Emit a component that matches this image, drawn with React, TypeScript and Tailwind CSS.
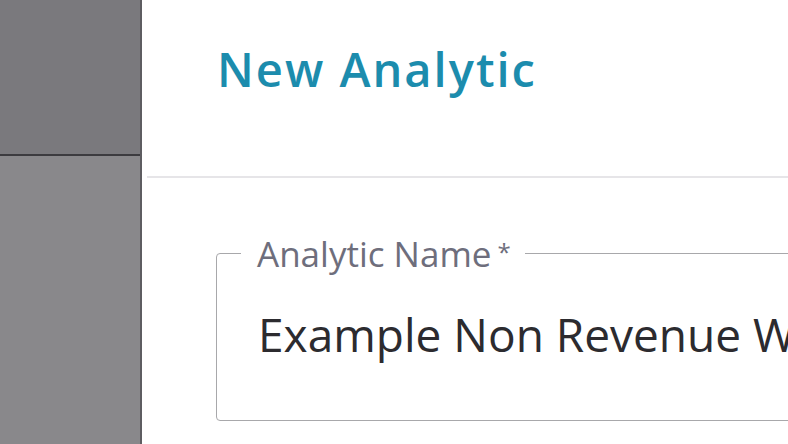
export default function App() {
  return (
    <div className="flex h-[444px] w-[788px] overflow-hidden bg-white" style={{ fontFamily: '"Open Sans", "Noto Sans", sans-serif' }}>
      {/* dimmed background page */}
      <div className="flex w-[140px] shrink-0 flex-col">
        <div className="h-[154px] bg-[#7a797d]" />
        <div className="h-[2px] bg-[#3c3b3f]" />
        <div className="flex-1 bg-[#89888b]" />
      </div>
      <div className="w-[2px] shrink-0 bg-[#5e5d61]" />

      {/* dialog */}
      <div className="flex min-w-0 flex-1 flex-col">
        <div className="flex h-[176px] items-center pl-[75px] pb-[38px]">
          <h1 className="whitespace-nowrap text-[47px] font-semibold leading-none tracking-[2px] text-[#1c8cad]">New Analytic</h1>
        </div>
        <div className="ml-[5px] h-[2px] bg-[#e6e5e8]" />
        <div className="pl-[74px] pt-[58px]">
          <fieldset className="h-[185px] w-[700px] rounded-[4px] border border-[#a8a8ab] pl-[24px] pr-0">
            <legend className="whitespace-nowrap pl-[16px] pr-[14px] text-[35px] leading-none text-[#6e6e7c]">
              Analytic Name<span className="ml-[6px] relative -top-[6px] text-[24px]">*</span>
            </legend>
            <div className="whitespace-nowrap pl-[17px] pt-[40px] text-[46px] leading-none text-[#2c2b2f]">Example Non Revenue Water</div>
          </fieldset>
        </div>
      </div>
    </div>
  );
}
